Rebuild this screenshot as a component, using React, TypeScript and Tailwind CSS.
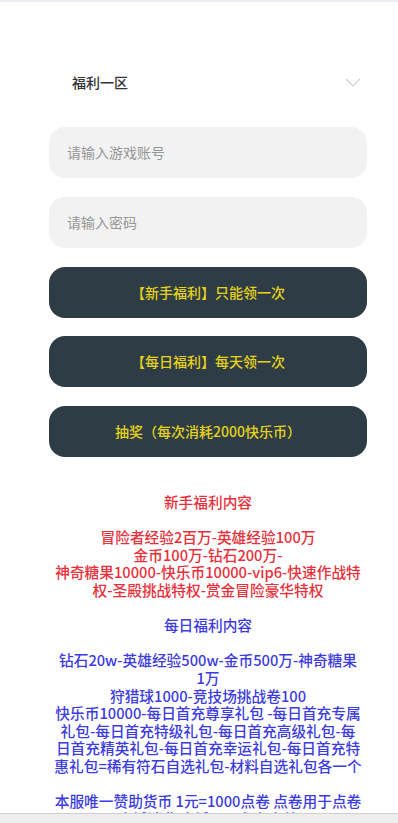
import React from "react";

const redLines = [
  "新手福利内容",
  "",
  "冒险者经验2百万-英雄经验100万",
  "金币100万-钻石200万-",
  "神奇糖果10000-快乐币10000-vip6-快速作战特",
  "权-圣殿挑战特权-赏金冒险豪华特权",
  "",
];

const blueLines = [
  "每日福利内容",
  "",
  "钻石20w-英雄经验500w-金币500万-神奇糖果",
  "1万",
  "狩猎球1000-竞技场挑战卷100",
  "快乐币10000-每日首充尊享礼包 -每日首充专属",
  "礼包-每日首充特级礼包-每日首充高级礼包-每",
  "日首充精英礼包-每日首充幸运礼包-每日首充特",
  "惠礼包=稀有符石自选礼包-材料自选礼包各一个",
  "",
  "本服唯一赞助货币 1元=1000点卷 点卷用于点卷",
  "商城消费 商城三天左右完善",
];

export default function App() {
  return (
    <div className="min-h-[823px] w-[398px] bg-white font-['Noto_Sans_CJK_SC','Noto_Sans',sans-serif] border-t-2 border-[#ececf2] overflow-hidden">
      <div className="pl-[49px] pr-[31px] pt-[58px] pb-[40px] flex flex-col">
        <div className="h-[44px] flex items-center justify-between pl-[23px] pr-[6px]">
          <span className="text-[14px] font-medium text-[#333333]">福利一区</span>
          <svg width="16" height="9" viewBox="0 0 16 9" fill="none">
            <path d="M1 1l7 7 7-7" stroke="#cfcfcf" strokeWidth="1.2" />
          </svg>
        </div>
        <div className="mt-[23px] flex flex-col gap-[18.75px]">
          <div className="h-[51px] rounded-[16px] bg-[#f2f2f2] flex items-center pl-[18px]">
            <span className="text-[14px] text-[#969696]">请输入游戏账号</span>
          </div>
          <div className="h-[51px] rounded-[16px] bg-[#f2f2f2] flex items-center pl-[18px]">
            <span className="text-[14px] text-[#969696]">请输入密码</span>
          </div>
          <div className="h-[51px] rounded-[16px] bg-[#2e3d45] flex items-center justify-center">
            <span className="text-[14px] font-medium text-[#e6d21a]">【新手福利】只能领一次</span>
          </div>
          <div className="h-[51px] rounded-[16px] bg-[#2e3d45] flex items-center justify-center">
            <span className="text-[14px] font-medium text-[#e6d21a]">【每日福利】每天领一次</span>
          </div>
          <div className="h-[51px] rounded-[16px] bg-[#2e3d45] flex items-center justify-center">
            <span className="text-[14px] font-medium text-[#e6d21a]">抽奖（每次消耗2000快乐币）</span>
          </div>
        </div>
        <div className="mt-[36px] flex flex-col items-center text-[14.7px] leading-[17.6px] font-medium">
          {redLines.map((l, i) => (
            <div key={"r" + i} className="whitespace-pre text-[#e8303a] h-[17.6px]">
              {l}
            </div>
          ))}
          {blueLines.map((l, i) => (
            <div key={"b" + i} className="whitespace-pre text-[#3c3ce0] h-[17.6px]">
              {l}
            </div>
          ))}
        </div>
      </div>
      <div className="fixed bottom-0 left-0 right-0 h-[10px] bg-[#eeeeee] border-t border-[#cfcfcf]" />
    </div>
  );
}
